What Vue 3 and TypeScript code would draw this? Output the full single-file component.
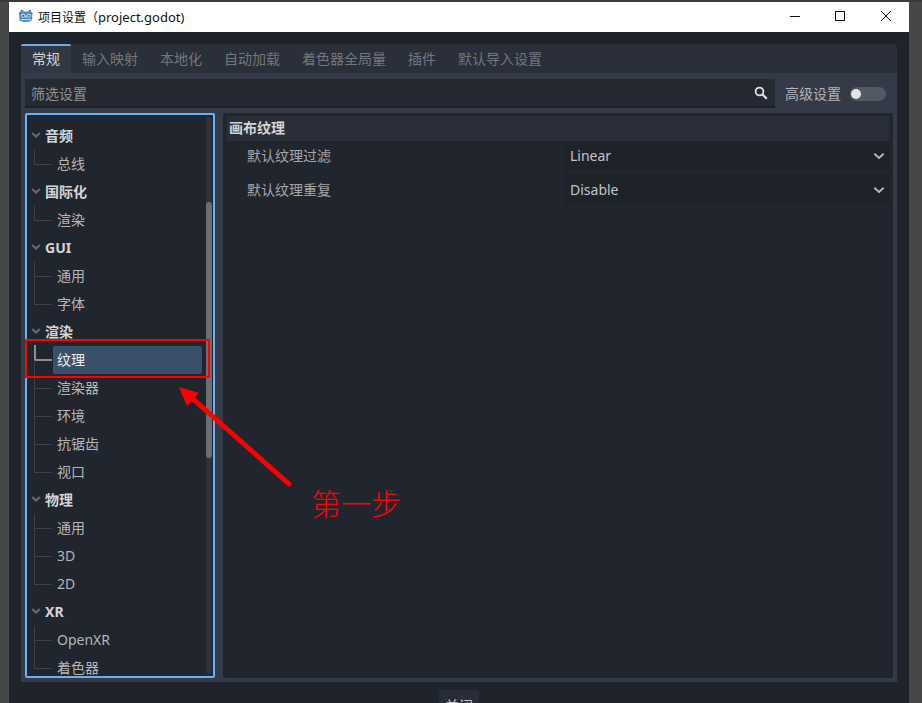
<script setup lang="ts">
interface Row { label: string; head?: boolean; selected?: boolean; first?: boolean }
const tabs = ['常规', '输入映射', '本地化', '自动加载', '着色器全局量', '插件', '默认导入设置']
const rows: Row[] = [
  { label: '音频', head: true }, { label: '总线', first: true },
  { label: '国际化', head: true }, { label: '渲染', first: true },
  { label: 'GUI', head: true }, { label: '通用', first: true }, { label: '字体' },
  { label: '渲染', head: true }, { label: '纹理', selected: true, first: true }, { label: '渲染器' }, { label: '环境' }, { label: '抗锯齿' }, { label: '视口' },
  { label: '物理', head: true }, { label: '通用', first: true }, { label: '3D' }, { label: '2D' },
  { label: 'XR', head: true }, { label: 'OpenXR', first: true }, { label: '着色器' },
]
const settings = [
  { label: '默认纹理过滤', value: 'Linear' },
  { label: '默认纹理重复', value: 'Disable' },
]
</script>

<template>
  <div class="screen">
    <div class="window">
      <header class="titlebar">
        <svg class="logo" width="16" height="16" viewBox="0 0 16 16">
          <path d="M3.200 1.500l2 .7.500 1.300h4.600l.5-1.300 2-.7.5 2.300 1.500 1.200-.6 2.600v4.400l-2.400 1.500-2.300.5H6l-2.300-.5-2.400-1.500V7.600L.7 5l1.500-1.200z" fill="#4f8fc4"/>
          <circle cx="5.200" cy="7.600" r="1.900" fill="#e8f0f7"/><circle cx="10.800" cy="7.600" r="1.900" fill="#e8f0f7"/>
          <circle cx="5.400" cy="7.800" r="1" fill="#39424e"/><circle cx="10.600" cy="7.800" r="1" fill="#39424e"/>
          <rect x="7.400" y="7.500" width="1.200" height="2" fill="#e8f0f7"/>
          <path d="M3 11h10v1h-10z" fill="#cfdfee"/>
        </svg>
        <span class="title">项目设置（<span class="latin">project.godot)</span></span>
        <div class="controls">
          <svg width="12" height="12" viewBox="0 0 12 12"><path d="M1 6.500h10" stroke="#111" fill="none"/></svg>
          <svg class="max" width="12" height="12" viewBox="0 0 12 12"><rect x="1.500" y="1.500" width="9" height="9" stroke="#111" fill="none"/></svg>
          <svg width="12" height="12" viewBox="0 0 12 12"><path d="M1 1l10 10M11 1L1 11" stroke="#111" fill="none"/></svg>
        </div>
      </header>

      <main class="body">
        <div class="tabbar">
          <span v-for="(t, i) in tabs" :key="t" class="tab" :class="{ active: i === 0 }">{{ t }}</span>
        </div>
        <section class="panel">
          <div class="filter">
            <div class="search">
              <span>筛选设置</span>
              <svg width="14" height="14" viewBox="0 0 14 14"><circle cx="5.500" cy="5.500" r="3.900" fill="none" stroke="#dfe1e4" stroke-width="1.800"/><path d="M8.500 8.500l4.300 4.300" stroke="#dfe1e4" stroke-width="2.200"/></svg>
            </div>
            <span class="adv">高级设置</span>
            <span class="toggle"><i></i></span>
          </div>
          <div class="split">
            <aside class="tree">
              <div class="list">
                <template v-for="(r, i) in rows" :key="i">
                  <div v-if="r.head" class="row head">
                    <svg class="chev" width="10" height="10" viewBox="0 0 10 10"><path d="M1.200 3L5 6.600 8.800 3" fill="none" stroke="#676a72" stroke-width="2"/></svg>
                    <span>{{ r.label }}</span>
                  </div>
                  <div v-else class="row child" :class="{ sel: r.selected, first: r.first }">
                    <i class="branch"></i>
                    <span class="cell">{{ r.label }}</span>
                  </div>
                </template>
              </div>
              <div class="scroll"><div class="thumb"></div></div>
            </aside>
            <div class="inspector">
              <div class="section">画布纹理</div>
              <div v-for="s in settings" :key="s.label" class="prop">
                <span class="prop-label">{{ s.label }}</span>
                <div class="select">
                  <span class="value">{{ s.value }}</span>
                  <svg width="12" height="12" viewBox="0 0 12 12"><path d="M1.300 3.800L6 8l4.700-4.200" fill="none" stroke="#b4b6b9" stroke-width="2"/></svg>
                </div>
              </div>
            </div>
          </div>
        </section>
        <footer class="footer"><button class="close">关闭</button></footer>
      </main>
    </div>

    <svg class="annot" width="922" height="703" viewBox="0 0 922 703">
      <rect x="26" y="340" width="183" height="37" fill="none" stroke="#f00" stroke-width="2"/>
      <path d="M289 484L192 398" stroke="#f00" stroke-width="5" stroke-linecap="round" fill="none"/>
      <path d="M179 387L199 393 187 406z" fill="#f00"/>
    </svg>
    <span class="note">第一步</span>
  </div>
</template>

<style>
html, body { margin: 0; background: #47484a; overflow: hidden; }
</style>

<style scoped>
.screen {
  position: relative;
  width: 922px;
  height: 703px;
  overflow: hidden;
  background: #464748;
  border-top: 2px solid #3a3a3b;
  font-family: "Noto Sans", "Noto Sans CJK SC", sans-serif;
  font-size: 14px;
  box-sizing: border-box;
  padding: 0 13px 0 9px;
}
.window { display: flex; flex-direction: column; height: 701px; }
.titlebar {
  display: flex;
  align-items: center;
  height: 30px;
  flex: none;
  background: #fff;
  color: #111;
  padding-left: 9px;
}
.logo { flex: none; margin-top: -2px; }
.title { margin-left: 4px; font-size: 12px; font-family: "Open Sans", "Noto Sans CJK SC", sans-serif; }
.latin { font-size: 13px; font-family: "Noto Sans", sans-serif; }
.controls { margin-left: auto; display: flex; gap: 33px; padding: 0 17px 2px 0; align-items: center; }
.controls svg { display: block; }
.controls .max { margin-right: 1px; }
.body {
  flex: 1;
  min-height: 0;
  display: flex;
  flex-direction: column;
  background: #1f232b;
  padding: 12px 12px 0;
}
.tabbar {
  display: flex;
  flex: none;
  height: 29px;
  background: #2a2f3a;
  border-radius: 3px 3px 0 0;
}
.tab {
  box-sizing: border-box;
  padding: 0 11px;
  line-height: 29px;
  color: #73767c;
  white-space: nowrap;
}
.tab.active {
  color: #d4d5d8;
  background: #313744;
  border-top: 2px solid #69aeea;
  line-height: 25px;
  border-radius: 2px 2px 0 0;
}
.panel {
  flex: none;
  height: 609px;
  box-sizing: border-box;
  background: #343a47;
  padding: 6px 4px 4px;
  display: flex;
  flex-direction: column;
}
.filter { display: flex; align-items: center; height: 29px; flex: none; }
.search {
  width: 750px;
  height: 29px;
  box-sizing: border-box;
  display: flex;
  align-items: center;
  justify-content: space-between;
  background: #252932;
  border-bottom: 2px solid #1d2027;
  padding: 0 7px 0 6px;
  color: #8f9196;
  flex: none;
}
.search svg { display: block; }
.adv { margin: 0 0 2px 10px; color: #b3b5b9; }
.toggle {
  margin-left: 9px;
  width: 36px;
  height: 14px;
  border-radius: 7px;
  background: #545862;
  position: relative;
}
.toggle i {
  position: absolute;
  left: 1px;
  top: 2px;
  width: 10px;
  height: 10px;
  border-radius: 50%;
  background: #e2e3e5;
}
.split { display: flex; gap: 8px; flex: 1; min-height: 0; margin-top: 5px; }
.tree {
  width: 190px;
  box-sizing: border-box;
  flex: none;
  border: 2px solid #69b1f2;
  border-radius: 2px;
  background: #21252e;
  display: flex;
  overflow: hidden;
  position: relative;
}
.list { flex: 1; min-width: 0; padding-top: 7px; overflow: hidden; }
.row { height: 28px; box-sizing: border-box; display: flex; align-items: center; position: relative; white-space: nowrap; }
.head { color: #d4d5d8; font-weight: 700; padding: 0 0 2px 4px; }
.head .chev { margin-right: 4px; flex: none; }
.child { color: #b4b5b8; padding-left: 26px; }
.cell { flex: 1; height: 28px; line-height: 28px; padding-left: 4px; margin-right: 4px; }
.branch {
  position: absolute;
  left: 7px;
  top: -14px;
  width: 18px;
  height: 29px;
  box-sizing: border-box;
  border-left: 1px solid #3d4048;
  border-bottom: 1px solid #3d4048;
}
.first .branch { top: 0; height: 15px; }
.sel { color: #eceded; }
.sel .cell { background: #3a5068; border-radius: 2px; }
.sel .branch { border-left: 2px solid #8d8f94; border-bottom: 2px solid #8d8f94; top: -1px; height: 16px; }
.scroll { width: 6px; flex: none; background: #2d323c; margin: 2px 1px 2px 0; border-radius: 3px; position: relative; }
.thumb { position: absolute; left: 0; right: 0; top: 85px; height: 256px; background: #6a6d73; border-radius: 3px; }
.inspector {
  flex: 1;
  min-width: 0;
  background: #21252e;
  border-radius: 2px;
  padding: 3px 4px 0;
}
.section {
  height: 25px;
  line-height: 24px;
  padding-left: 2px;
  background: #2a2e38;
  color: #d4d5d8;
  font-weight: 700;
}
.prop { display: flex; height: 34px; align-items: flex-start; }
.prop-label { width: 337px; padding-left: 20px; box-sizing: border-box; color: #a5a7ab; line-height: 30px; flex: none; }
.select {
  flex: 1;
  height: 30px;
  display: flex;
  align-items: center;
  justify-content: space-between;
  padding: 0 4px 0 6px;
  background: #1e2229;
  color: #c3c4c7;
  border-radius: 2px;
}
.value { margin-bottom: 2px; }
.select svg { display: block; }
.footer { display: flex; justify-content: center; padding-top: 8px; }
.close {
  width: 40px;
  height: 30px;
  border: 0;
  padding: 0;
  background: #292d37;
  color: #c3c4c7;
  font: inherit;
  border-radius: 3px;
  flex: none;
}
.annot { position: absolute; left: 0; top: -2px; pointer-events: none; }
.note {
  position: absolute;
  left: 311px;
  top: 480px;
  color: #f00;
  font-size: 30px;
  line-height: 40px;
  font-family: "Noto Sans CJK SC", sans-serif;
  font-weight: 300;
}
</style>
